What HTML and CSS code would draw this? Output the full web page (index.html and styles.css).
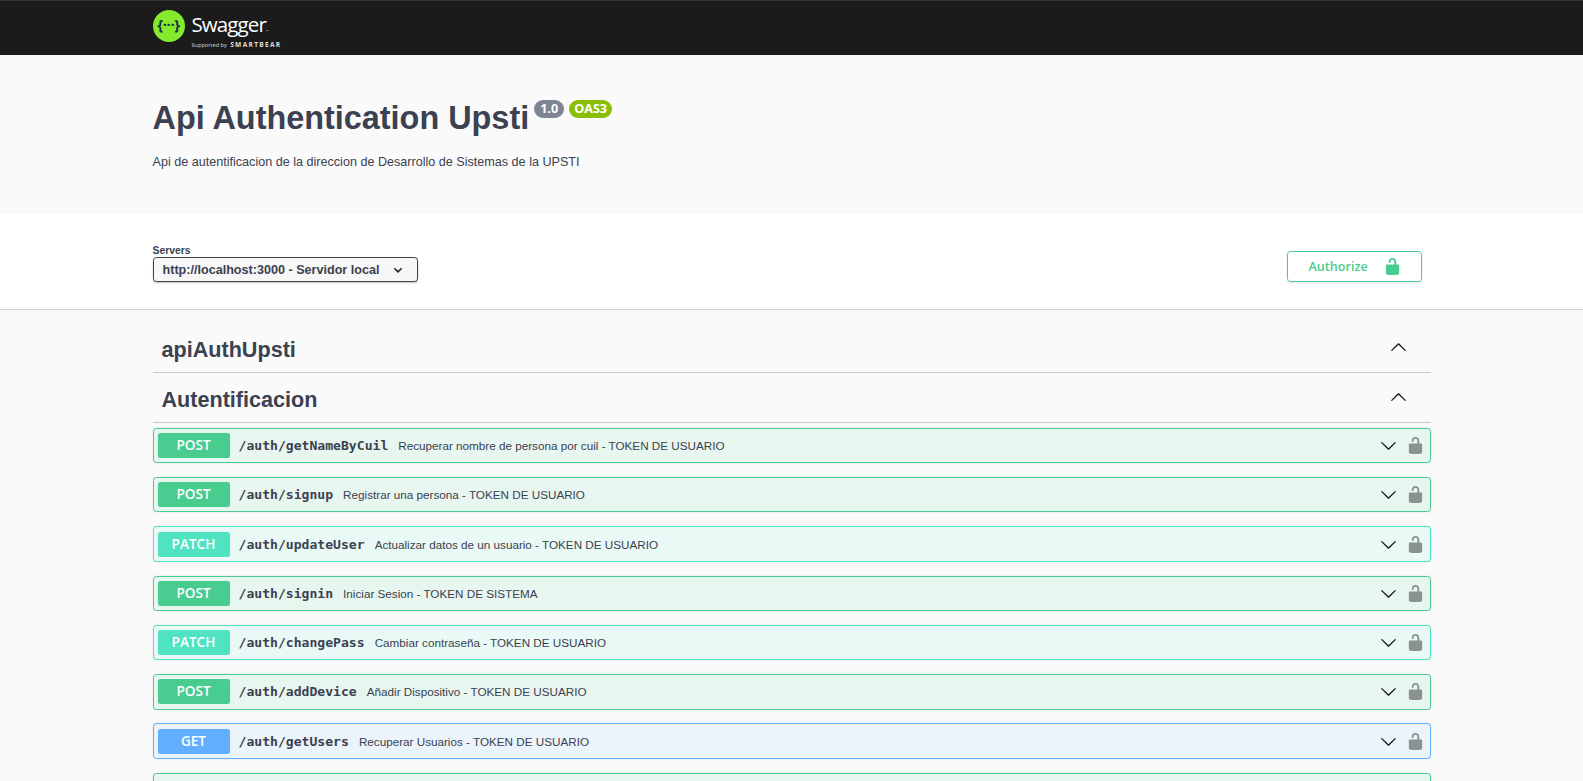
FILE: index.html
```html
<!DOCTYPE html>
<html>
<head>
    <title>Swagger UI</title>
    <link rel="stylesheet" href="styles.css">
</head>
<body>
    <svg class="sprites" width="0" height="0">
        <symbol id="lock" viewBox="0 0 20 20">
            <path d="M15.8 8H14V5.6C14 2.703 12.665 1 10 1 7.334 1 6 2.703 6 5.6V6h2v-.801C8 3.754 8.797 3 10 3c1.203 0 2 .754 2 2.199V8H4c-.553 0-1 .646-1 1.199V17c0 .549.428 1.139.951 1.307l1.197.387C5.672 18.861 6.55 19 7.1 19h5.8c.549 0 1.428-.139 1.951-.307l1.196-.387c.524-.167.953-.757.953-1.306V9.199C17 8.646 16.352 8 15.8 8z"/>
        </symbol>
        <symbol id="chevron-down" viewBox="0 0 20 20">
            <path d="M17.418 6.109c.272-.268.709-.268.979 0s.271.701 0 .969l-7.908 7.83c-.27.268-.707.268-.979 0l-7.908-7.83c-.27-.268-.27-.701 0-.969.271-.268.709-.268.979 0L10 13.25l7.418-7.141z"/>
        </symbol>
        <symbol id="chevron-up" viewBox="0 0 20 20">
            <path d="M2.582 13.891c-.272.268-.709.268-.979 0s-.271-.701 0-.969l7.908-7.83c.27-.268.707-.268.979 0l7.908 7.83c.27.268.27.701 0 .969-.271.268-.709.268-.979 0L10 6.75l-7.418 7.141z"/>
        </symbol>
        <symbol id="select-chevron" viewBox="0 0 12 12">
            <path d="M2.3 4.2 6 7.9l3.7-3.7" fill="none" stroke="#222" stroke-width="1.5"/>
        </symbol>
    </svg>

    <header class="topbar">
        <div class="wrap">
            <a class="logo">
                <span class="logo-mark">{···}</span>
                <span class="logo-text">
                    <span class="logo-name">Swagger<small>™</small></span>
                    <span class="logo-sub">Supported by <b>SMARTBEAR</b></span>
                </span>
            </a>
        </div>
    </header>

    <section class="info">
        <div class="wrap">
            <h1 class="title">Api Authentication Upsti<span class="badge badge-version">1.0</span><span class="badge badge-oas">OAS3</span></h1>
            <p class="description">Api de autentificacion de la direccion de Desarrollo de Sistemas de la UPSTI</p>
        </div>
    </section>

    <section class="schemes">
        <div class="wrap schemes-row">
            <div class="servers">
                <span class="servers-title">Servers</span>
                <div class="select">
                    <span>http://localhost:3000 - Servidor local</span>
                    <svg class="select-arrow"><use href="#select-chevron"/></svg>
                </div>
            </div>
            <button class="authorize">
                <span>Authorize</span>
                <svg class="authorize-lock"><use href="#lock"/></svg>
            </button>
        </div>
    </section>

    <main class="wrap operations">
        <div class="tag">
            <h3>apiAuthUpsti</h3>
            <svg class="tag-arrow"><use href="#chevron-up"/></svg>
        </div>
        <div class="tag tag-second">
            <h3>Autentificacion</h3>
            <svg class="tag-arrow"><use href="#chevron-up"/></svg>
        </div>

        <div class="op op-post">
            <span class="method">POST</span>
            <span class="path">/auth/getNameByCuil</span>
            <span class="summary">Recuperar nombre de persona por cuil - TOKEN DE USUARIO</span>
            <svg class="op-arrow"><use href="#chevron-down"/></svg>
            <svg class="op-lock"><use href="#lock"/></svg>
        </div>
        <div class="op op-post">
            <span class="method">POST</span>
            <span class="path">/auth/signup</span>
            <span class="summary">Registrar una persona - TOKEN DE USUARIO</span>
            <svg class="op-arrow"><use href="#chevron-down"/></svg>
            <svg class="op-lock"><use href="#lock"/></svg>
        </div>
        <div class="op op-patch">
            <span class="method">PATCH</span>
            <span class="path">/auth/updateUser</span>
            <span class="summary">Actualizar datos de un usuario - TOKEN DE USUARIO</span>
            <svg class="op-arrow"><use href="#chevron-down"/></svg>
            <svg class="op-lock"><use href="#lock"/></svg>
        </div>
        <div class="op op-post">
            <span class="method">POST</span>
            <span class="path">/auth/signin</span>
            <span class="summary">Iniciar Sesion - TOKEN DE SISTEMA</span>
            <svg class="op-arrow"><use href="#chevron-down"/></svg>
            <svg class="op-lock"><use href="#lock"/></svg>
        </div>
        <div class="op op-patch">
            <span class="method">PATCH</span>
            <span class="path">/auth/changePass</span>
            <span class="summary">Cambiar contraseña - TOKEN DE USUARIO</span>
            <svg class="op-arrow"><use href="#chevron-down"/></svg>
            <svg class="op-lock"><use href="#lock"/></svg>
        </div>
        <div class="op op-post">
            <span class="method">POST</span>
            <span class="path">/auth/addDevice</span>
            <span class="summary">Añadir Dispositivo - TOKEN DE USUARIO</span>
            <svg class="op-arrow"><use href="#chevron-down"/></svg>
            <svg class="op-lock"><use href="#lock"/></svg>
        </div>
        <div class="op op-get">
            <span class="method">GET</span>
            <span class="path">/auth/getUsers</span>
            <span class="summary">Recuperar Usuarios - TOKEN DE USUARIO</span>
            <svg class="op-arrow"><use href="#chevron-down"/></svg>
            <svg class="op-lock"><use href="#lock"/></svg>
        </div>
        <div class="op op-post"></div>
    </main>
</body>
</html>
```

FILE: styles.css
```css
html, body {
    height: 100%;
    overflow: hidden;
}
body {
    margin: 0;
    background: #fafafa;
    font-family: "Liberation Sans", Arial, sans-serif;
    color: #3b4151;
}
.sprites {
    display: none;
}
.wrap {
    width: 1278px;
    margin: 0 auto;
    box-sizing: border-box;
}

/* top bar */
.topbar {
    height: 55px;
    box-sizing: border-box;
    background: #1b1b1b;
    border-top: 1px solid #333;
}
.logo {
    display: flex;
    align-items: center;
    gap: 7px;
    height: 50px;
    color: #fff;
}
.logo-mark {
    width: 32px;
    height: 32px;
    border-radius: 50%;
    background: #85ea2d;
    color: #173646;
    font: bold 15px/29px "Open Sans", sans-serif;
    letter-spacing: -0.4px;
    text-align: center;
}
.logo-text {
    display: flex;
    flex-direction: column;
    padding-top: 10px;
}
.logo-name {
    font: 400 20.5px/22px "Open Sans", sans-serif;
    letter-spacing: -0.9px;
}
.logo-name small {
    font-size: 3px;
    vertical-align: baseline;
}
.logo-sub {
    margin-top: -2px;
    font: 5.6px/9px "Open Sans", sans-serif;
    color: #ddd;
}
.logo-sub b {
    font-size: 6.6px;
    letter-spacing: 1.3px;
    margin-left: 2px;
}

/* info */
.info {
    height: 159px;
    box-sizing: border-box;
    padding-top: 43px;
}
.title {
    margin: 0;
    font-size: 32.4px;
    line-height: 40px;
    font-weight: bold;
}
.badge {
    display: inline-block;
    position: relative;
    top: -16px;
    margin-left: 5px;
    padding: 1px 5px;
    border-radius: 9px;
    color: #fff;
    font: bold 12.6px/16px "Open Sans", sans-serif;
}
.badge-version {
    padding: 1px 6px;
    background: #7d8492;
}
.badge-oas {
    background: #89bf04;
}
.description {
    margin: 16px 0 0;
    font-size: 12.6px;
    line-height: 16px;
}

/* servers */
.schemes {
    height: 95px;
    box-sizing: border-box;
    padding-top: 31px;
    background: #fff;
    box-shadow: 0 1px 1px rgba(0,0,0,0.15);
    position: relative;
}
.schemes-row {
    display: flex;
    justify-content: space-between;
    align-items: flex-start;
}
.servers {
    display: flex;
    flex-direction: column;
}
.servers-title {
    font-size: 10.4px;
    font-weight: bold;
    line-height: 12px;
}
.select {
    display: flex;
    align-items: center;
    gap: 13px;
    height: 25px;
    width: 265px;
    box-sizing: border-box;
    padding: 0 0 0 9px;
    border: 1px solid #41444e;
    border-radius: 3.5px;
    background: #f7f7f7;
    box-shadow: 0 1px 2px rgba(0,0,0,0.25);
    font-size: 12.6px;
    font-weight: bold;
}
.select-arrow {
    width: 12px;
    height: 12px;
}
.authorize {
    display: flex;
    align-items: center;
    justify-content: space-between;
    width: 135px;
    height: 31px;
    margin: 6px 9px 0 0;
    padding: 0 19px 0 21px;
    border: 1.5px solid #49cc90;
    border-radius: 3.5px;
    background: transparent;
    box-shadow: 0 1px 2px rgba(0,0,0,0.1);
    color: #49cc90;
    font: 600 12.6px "Open Sans", sans-serif;
}
.authorize-lock {
    width: 19px;
    height: 19px;
    fill: #49cc90;
}

/* tags */
.operations {
    padding-top: 17px;
}
.tag {
    display: flex;
    align-items: center;
    justify-content: space-between;
    height: 47px;
    box-sizing: border-box;
    padding: 2px 24px 0 9px;
    border-bottom: 1px solid #c8c9cc;
}
.tag-second {
    height: 50px;
    padding-top: 4px;
    margin-bottom: 4.7px;
}
.tag h3 {
    margin: 0;
    font-size: 21.6px;
    font-weight: bold;
}
.tag-arrow {
    width: 17px;
    height: 17px;
    fill: #111;
    margin-bottom: 5px;
}

/* operations */
.op {
    display: flex;
    align-items: center;
    height: 35.5px;
    box-sizing: border-box;
    margin-bottom: 13.8px;
    padding: 0 4px;
    border: 1px solid;
    border-radius: 3.5px;
    box-shadow: 0 0 2px rgba(0,0,0,0.12);
}
.op-post {
    background: #e8f6f0;
    border-color: #49cc90;
}
.op-patch {
    background: #e9f9f5;
    border-color: #50e3c2;
}
.op-get {
    background: #ebf3fb;
    border-color: #61affe;
}
.method {
    width: 72px;
    height: 25px;
    flex: none;
    margin-right: 9px;
    border-radius: 2.5px;
    color: #fff;
    font: 600 13.6px/23px "Open Sans", sans-serif;
    text-align: center;
}
.op-post .method {
    background: #49cc90;
}
.op-patch .method {
    background: #50e3c2;
}
.op-get .method {
    background: #61affe;
}
.path {
    font: bold 13.1px "DejaVu Sans Mono", monospace;
    margin-right: 10px;
}
.summary {
    font-size: 11.7px;
    flex: 1;
}
.op-arrow {
    width: 17px;
    height: 17px;
    fill: #111;
    margin-right: 9px;
}
.op-lock {
    width: 19px;
    height: 19px;
    fill: #8b9090;
    margin-right: 1px;
}
```
